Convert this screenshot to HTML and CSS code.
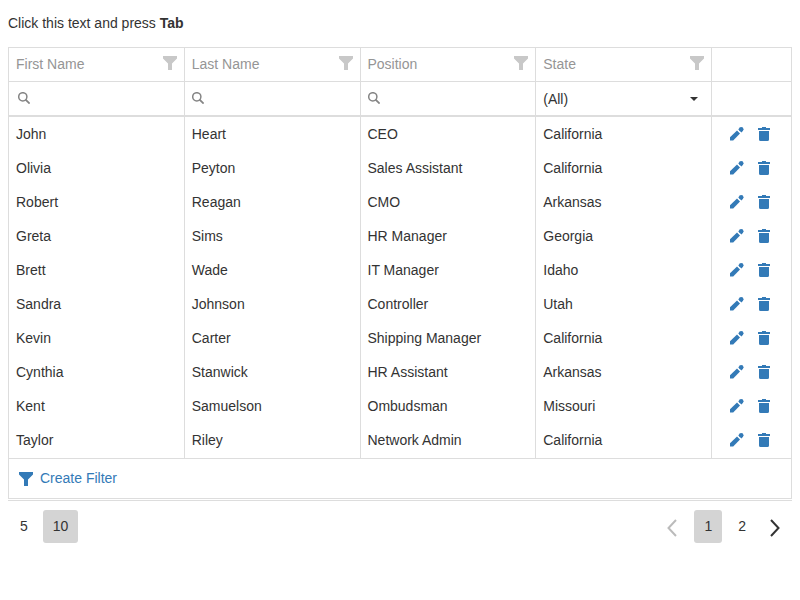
FILE: index.html
```
<!DOCTYPE html>
<html lang="en">
<head>
<meta charset="utf-8">
<title>Employees</title>
<link rel="stylesheet" href="styles.css">
</head>
<body>
<svg class="sprite" aria-hidden="true">
  <symbol id="funnel" viewBox="0 0 14 14"><path d="M0 0h14v2.500L9 7.500V14H5V7.500L0 2.500z"/></symbol>
  <symbol id="search" viewBox="0 0 12 12"><circle cx="4.800" cy="4.800" r="4.100" fill="none" stroke="currentColor" stroke-width="1.500"/><path d="M7.600 7.600L11.600 11.600" fill="none" stroke="currentColor" stroke-width="1.800"/></symbol>
  <symbol id="pencil" viewBox="0 0 14 14"><path d="M0 10.200L7 3.400l3 3L3.200 13.400H0z"/><circle cx="11.200" cy="2.300" r="2.300"/><path d="M8.300 2.300l1-1 3.200 3.200-1 1z"/></symbol>
  <symbol id="trash" viewBox="0 0 12 14"><path d="M0 1h4V0h4v1h4v2H0zM1 4h10v8.500Q11 14 9.500 14h-7Q1 14 1 12.500z"/></symbol>
</svg>
<p class="hint">Click this text and press <b>Tab</b></p>
<main>
  <div class="grid">
    <table>
      <colgroup><col><col><col><col><col class="col-commands"></colgroup>
      <thead>
        <tr class="titles">
          <th scope="col"><div class="title"><span>First Name</span><button type="button" aria-label="Filter First Name"><svg><use href="#funnel"/></svg></button></div></th>
          <th scope="col"><div class="title"><span>Last Name</span><button type="button" aria-label="Filter Last Name"><svg><use href="#funnel"/></svg></button></div></th>
          <th scope="col"><div class="title"><span>Position</span><button type="button" aria-label="Filter Position"><svg><use href="#funnel"/></svg></button></div></th>
          <th scope="col"><div class="title"><span>State</span><button type="button" aria-label="Filter State"><svg><use href="#funnel"/></svg></button></div></th>
          <td></td>
        </tr>
        <tr class="filters">
          <td><label class="search"><svg><use href="#search"/></svg><input type="text" aria-label="Search First Name"></label></td>
          <td><label class="search"><svg><use href="#search"/></svg><input type="text" aria-label="Search Last Name"></label></td>
          <td><label class="search"><svg><use href="#search"/></svg><input type="text" aria-label="Search Position"></label></td>
          <td><label class="choice"><select aria-label="State"><option>(All)</option><option>Arkansas</option><option>California</option><option>Georgia</option><option>Idaho</option><option>Missouri</option><option>Utah</option></select><svg viewBox="0 0 8 4"><path d="M0 0h8L4 4z"/></svg></label></td>
          <td></td>
        </tr>
      </thead>
      <tbody id="rows"></tbody>
    </table>
    <div class="filter-panel"><a href="#filter"><svg><use href="#funnel"/></svg><span>Create Filter</span></a></div>
  </div>
  <nav class="pager" aria-label="Pages">
    <div class="sizes"><button type="button">5</button><button type="button" class="selected">10</button></div>
    <div class="pages">
      <button type="button" class="arrow" aria-label="Previous page" disabled><svg viewBox="0 0 10 18"><path d="M9 1L1.500 9L9 17"/></svg></button>
      <button type="button" class="selected">1</button>
      <button type="button">2</button>
      <button type="button" class="arrow" aria-label="Next page"><svg viewBox="0 0 10 18"><path d="M1 1L8.500 9L1 17"/></svg></button>
    </div>
  </nav>
</main>
<script src="grid.js"></script>
</body>
</html>
```
FILE: styles.css
```
* { box-sizing: border-box; }

body {
  margin: 8px;
  background: #fff;
  color: #333;
  font: 14px/20px "Liberation Sans", Arial, sans-serif;
}

button, input, select {
  margin: 0;
  padding: 0;
  border: 0;
  background: none;
  color: inherit;
  font: inherit;
}

button { cursor: pointer; }
svg { display: block; flex: none; fill: currentColor; }
a { color: #337ab7; text-decoration: none; }

.sprite { position: absolute; width: 0; height: 0; }

.hint { margin: 0; padding: 5px 0 14px; }

.grid { border: 1px solid #ddd; }

table {
  width: 100%;
  table-layout: fixed;
  border-collapse: separate;
  border-spacing: 0;
}

.col-commands { width: 79px; }

th, td {
  height: 34px;
  padding: 0 7px;
  border-right: 1px solid #ddd;
  text-align: left;
  font-weight: normal;
}

tr > :last-child { border-right: 0; }
tbody tr:last-child td { height: 35px; padding-bottom: 1px; }

.titles > * { padding-bottom: 1px; border-bottom: 1px solid #ddd; color: #959595; }
.filters > * { height: 35px; border-bottom: 2px solid #ddd; }

.title { display: flex; align-items: center; justify-content: space-between; }
.title button { color: #c8c8c8; }
.title svg { width: 14px; height: 14px; margin-bottom: 2px; }

.search, .choice { display: flex; align-items: center; height: 32px; }
.search { padding-bottom: 2px; }
.search svg { width: 12px; height: 12px; margin-right: 6px; color: #858585; }
.filters td:first-child .search { padding-left: 2px; }
.search input { flex: 1; min-width: 0; outline: 0; }
.choice select { flex: 1; min-width: 0; appearance: none; outline: 0; }
.choice svg { width: 8px; height: 4px; margin-right: 6px; }

.commands { display: flex; justify-content: center; gap: 14px; padding-right: 4px; }
.commands svg { height: 14px; }
.edit svg { width: 14px; }
.remove svg { width: 12px; }

.filter-panel {
  display: flex;
  align-items: center;
  height: 40px;
  padding: 0 10px 2px;
  border-top: 1px solid #ddd;
}

.filter-panel a { display: flex; align-items: center; gap: 7px; }
.filter-panel svg { width: 14px; height: 14px; margin-top: 2px; }

.pager {
  display: flex;
  justify-content: space-between;
  margin-top: 1px;
  padding: 9px 0 9px 2px;
  border-top: 1px solid #ddd;
}

.sizes, .pages { display: flex; gap: 6px; }
.sizes { gap: 5px; }
.pager button { height: 33px; padding: 0 10px 2px; border-radius: 3px; }
.pager .selected { background: #d4d4d4; }
.pager .arrow { padding: 2px 12px 0; }
.pages .arrow:first-child { margin-right: -1px; }
.pages .arrow:last-child { margin-left: -4px; }
.arrow svg { width: 10px; height: 18px; fill: none; stroke: currentColor; stroke-width: 2px; }
.arrow:disabled { color: #bbb; }
```
FILE: grid.js
```
const employees = [
  ["John", "Heart", "CEO", "California"],
  ["Olivia", "Peyton", "Sales Assistant", "California"],
  ["Robert", "Reagan", "CMO", "Arkansas"],
  ["Greta", "Sims", "HR Manager", "Georgia"],
  ["Brett", "Wade", "IT Manager", "Idaho"],
  ["Sandra", "Johnson", "Controller", "Utah"],
  ["Kevin", "Carter", "Shipping Manager", "California"],
  ["Cynthia", "Stanwick", "HR Assistant", "Arkansas"],
  ["Kent", "Samuelson", "Ombudsman", "Missouri"],
  ["Taylor", "Riley", "Network Admin", "California"]
];

document.getElementById("rows").innerHTML = employees.map(fields => `
  <tr>
    ${fields.map(text => `<td>${text}</td>`).join("")}
    <td><div class="commands">
      <a class="edit" href="#edit" aria-label="Edit ${fields[0]}"><svg><use href="#pencil"/></svg></a>
      <a class="remove" href="#delete" aria-label="Delete ${fields[0]}"><svg><use href="#trash"/></svg></a>
    </div></td>
  </tr>`).join("");
```
